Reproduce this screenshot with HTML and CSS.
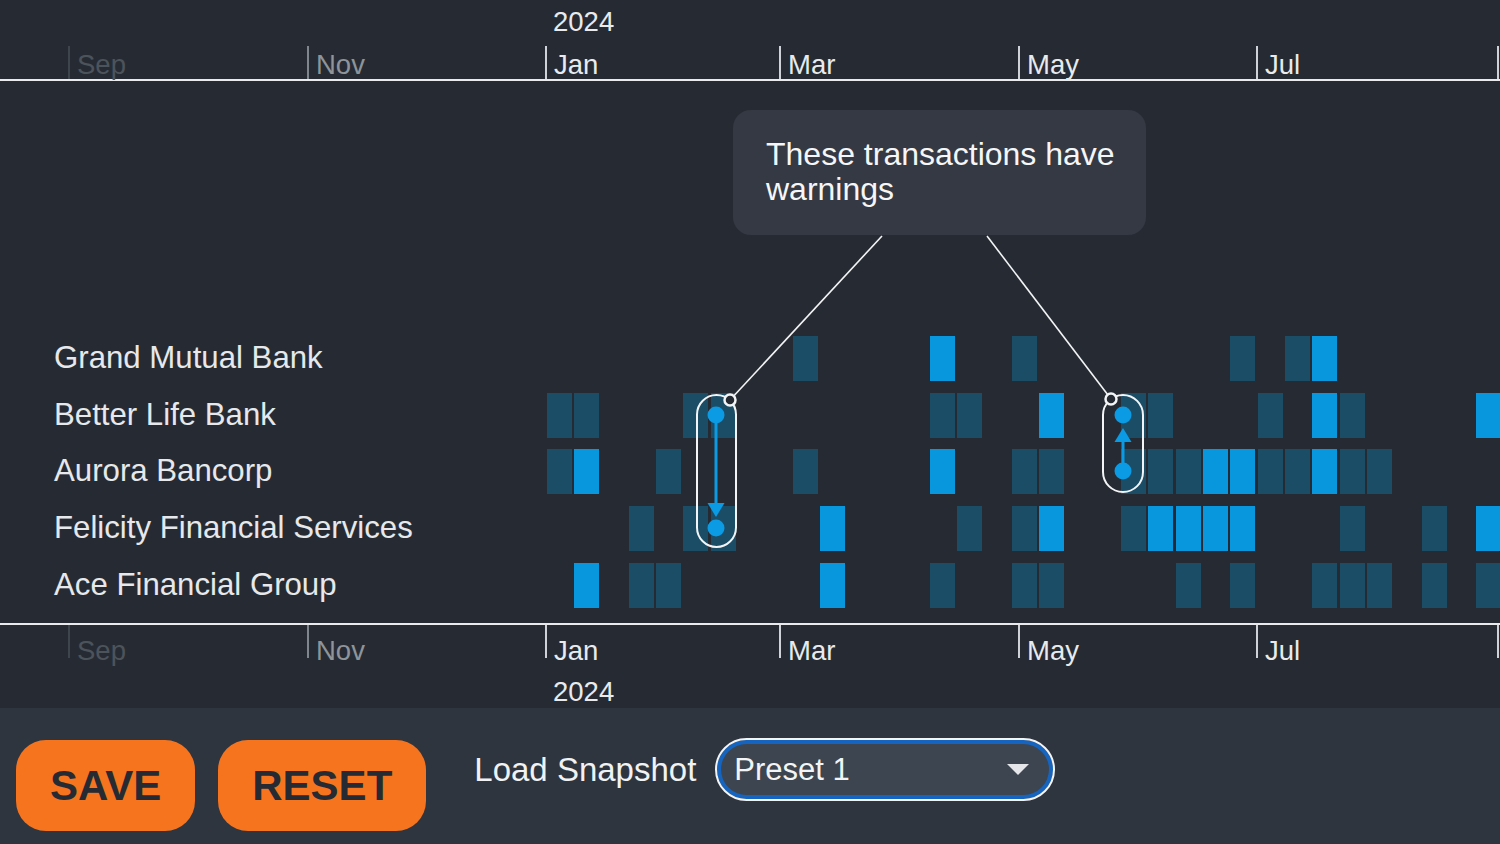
FILE: index.html
```html
<!DOCTYPE html>
<html lang="en">
<head>
<meta charset="utf-8">
<title>Transactions timeline</title>
<link rel="stylesheet" href="styles.css">
</head>
<body>
<div class="app">
  <div class="chart">
    <div class="axis axis-top">
      <div class="year">2024</div>
      <div class="months">
        <div class="m faint" style="width:239px"><span>Sep</span></div>
        <div class="m dim" style="width:238px"><span>Nov</span></div>
        <div class="m" style="width:234px"><span>Jan</span></div>
        <div class="m" style="width:239px"><span>Mar</span></div>
        <div class="m" style="width:238px"><span>May</span></div>
        <div class="m" style="width:241px"><span>Jul</span></div>
        <div class="m rest"></div>
      </div>
    </div>

    <div class="rows">
      <div class="row">
        <div class="label">Grand Mutual Bank</div>
        <div class="cells">
          <i></i><i></i><i></i><i></i><i></i><i></i><i></i><i></i><i></i><i class="d"></i>
          <i></i><i></i><i></i><i></i><i class="b"></i><i></i><i></i><i class="d"></i>
          <i></i><i></i><i></i><i></i><i></i><i></i><i></i><i class="d"></i><i></i><i class="d"></i><i class="b"></i>
        </div>
      </div>
      <div class="row">
        <div class="label">Better Life Bank</div>
        <div class="cells">
          <i class="d"></i><i class="d"></i><i></i><i></i><i></i><i class="d"></i><i class="d"></i>
          <i></i><i></i><i></i><i></i><i></i><i></i><i></i><i class="d"></i><i class="d"></i>
          <i></i><i></i><i class="b"></i><i></i><i></i><i class="d"></i><i class="d"></i>
          <i></i><i></i><i></i><i class="d"></i><i></i><i class="b"></i><i class="d"></i>
          <i></i><i></i><i></i><i></i><i class="b"></i>
        </div>
      </div>
      <div class="row">
        <div class="label">Aurora Bancorp</div>
        <div class="cells">
          <i class="d"></i><i class="b"></i><i></i><i></i><i class="d"></i><i></i><i></i><i></i><i></i><i class="d"></i>
          <i></i><i></i><i></i><i></i><i class="b"></i><i></i><i></i><i class="d"></i><i class="d"></i>
          <i></i><i></i><i class="d"></i><i class="d"></i><i class="d"></i><i class="b"></i><i class="b"></i>
          <i class="d"></i><i class="d"></i><i class="b"></i><i class="d"></i><i class="d"></i>
        </div>
      </div>
      <div class="row">
        <div class="label">Felicity Financial Services</div>
        <div class="cells">
          <i></i><i></i><i></i><i class="d"></i><i></i><i class="d"></i><i class="d"></i>
          <i></i><i></i><i></i><i class="b"></i><i></i><i></i><i></i><i></i><i class="d"></i><i></i><i class="d"></i><i class="b"></i>
          <i></i><i></i><i class="d"></i><i class="b"></i><i class="b"></i><i class="b"></i><i class="b"></i>
          <i></i><i></i><i></i><i class="d"></i><i></i><i></i><i class="d"></i><i></i><i class="b"></i>
        </div>
      </div>
      <div class="row">
        <div class="label">Ace Financial Group</div>
        <div class="cells">
          <i></i><i class="b"></i><i></i><i class="d"></i><i class="d"></i>
          <i></i><i></i><i></i><i></i><i></i><i class="b"></i><i></i><i></i><i></i><i class="d"></i>
          <i></i><i></i><i class="d"></i><i class="d"></i><i></i><i></i><i></i><i></i><i class="d"></i><i></i><i class="d"></i>
          <i></i><i></i><i class="d"></i><i class="d"></i><i class="d"></i><i></i><i class="d"></i><i></i><i class="d"></i>
        </div>
      </div>
    </div>

    <div class="axis axis-bottom">
      <div class="months">
        <div class="m faint" style="width:239px"><span>Sep</span></div>
        <div class="m dim" style="width:238px"><span>Nov</span></div>
        <div class="m" style="width:234px"><span>Jan</span></div>
        <div class="m" style="width:239px"><span>Mar</span></div>
        <div class="m" style="width:238px"><span>May</span></div>
        <div class="m" style="width:241px"><span>Jul</span></div>
        <div class="m rest"></div>
      </div>
      <div class="year">2024</div>
    </div>

    <div class="callout">These transactions have warnings</div>

    <svg class="overlay" width="1500" height="708" viewBox="0 0 1500 708">
      <line x1="882" y1="236" x2="730" y2="400" stroke="#f2f4f6" stroke-width="1.6"/>
      <line x1="987" y1="236" x2="1111" y2="399" stroke="#f2f4f6" stroke-width="1.6"/>

      <rect x="697" y="395" width="39" height="152" rx="19.5" fill="none" stroke="#f2f4f6" stroke-width="2"/>
      <circle cx="716" cy="415" r="8.5" fill="#0b9ae4"/>
      <circle cx="716" cy="528" r="8.5" fill="#0b9ae4"/>
      <line x1="716" y1="423" x2="716" y2="505" stroke="#0b9ae4" stroke-width="3"/>
      <polygon points="707.5,503 724.5,503 716,517" fill="#0b9ae4"/>

      <rect x="1103" y="395" width="40" height="97" rx="20" fill="none" stroke="#f2f4f6" stroke-width="2"/>
      <circle cx="1123" cy="415" r="8.5" fill="#0b9ae4"/>
      <circle cx="1123" cy="471" r="8.5" fill="#0b9ae4"/>
      <line x1="1123" y1="463" x2="1123" y2="440" stroke="#0b9ae4" stroke-width="3"/>
      <polygon points="1114.5,442 1131.5,442 1123,428" fill="#0b9ae4"/>

      <circle cx="730" cy="400" r="5.5" fill="#262b33" stroke="#f2f4f6" stroke-width="2.5"/>
      <circle cx="1111" cy="399" r="5.5" fill="#262b33" stroke="#f2f4f6" stroke-width="2.5"/>
    </svg>
  </div>

  <div class="toolbar">
    <button class="btn">SAVE</button>
    <button class="btn">RESET</button>
    <div class="snapshot">
      <span class="snap-label">Load Snapshot</span>
      <div class="select">
        <span>Preset 1</span>
        <svg class="caret" width="22" height="12" viewBox="0 0 22 12"><polygon points="0,0 22,0 11,11" fill="#e4e6e9"/></svg>
      </div>
    </div>
  </div>
</div>
</body>
</html>
```

FILE: styles.css
```css
* { box-sizing: border-box; }

html, body {
  margin: 0;
  padding: 0;
  background: #262b33;
  font-family: "Liberation Sans", Arial, sans-serif;
  color: #e8eaed;
}

.app {
  width: 1500px;
  height: 844px;
  display: flex;
  flex-direction: column;
  overflow: hidden;
}

.chart {
  position: relative;
  height: 708px;
  flex: none;
  background: #262b33;
  overflow: hidden;
}

/* ---------- axes ---------- */
.axis { font-size: 27.5px; color: #e8eaed; }

.axis .year {
  padding-left: 553px;
  line-height: 33px;
}

.axis-top .year {
  height: 46px;
  line-height: 43px;
}

.months {
  display: flex;
  padding-left: 68px;
}

.axis-top .months { border-bottom: 2px solid #e8eaed; }
.axis-bottom .months { border-top: 2px solid #e8eaed; }

.m {
  flex: none;
  height: 33px;
  border-left: 2px solid #cfd3d7;
  white-space: nowrap;
}

.m span {
  display: block;
  padding-left: 7px;
  line-height: 33px;
}

.axis-top .m span { padding-top: 2px; }
.axis-bottom .m span { margin-top: 9px; }

.m.rest { flex: 1; }
.m.faint { border-left-color: #3f454c; }
.m.faint span { color: #4d535b; }
.m.dim { border-left-color: #80868d; }
.m.dim span { color: #8e949a; }

.axis-bottom .year {
  margin-top: 17px;
}

/* ---------- rows ---------- */
.rows {
  margin-top: 255px;
  display: flex;
  flex-direction: column;
  gap: 11.67px;
}

.row {
  display: flex;
  height: 45px;
}

.label {
  flex: none;
  width: 546.7px;
  padding-left: 54px;
  font-size: 31.2px;
  line-height: 44px;
  color: #e6e8eb;
  white-space: nowrap;
}

.cells {
  display: grid;
  grid-template-columns: repeat(35, 25px);
  column-gap: 2.35px;
  height: 45px;
}

.cells i { display: block; height: 45px; }
.cells i.d { background: #1b4d67; }
.cells i.b { background: #0897dd; }

.axis-bottom { margin-top: 15.3px; }

/* ---------- overlays ---------- */
.callout {
  position: absolute;
  left: 733px;
  top: 110px;
  width: 413px;
  height: 125px;
  padding: 27px 16px 27px 33px;
  background: #353943;
  border-radius: 18px;
  font-size: 32px;
  line-height: 35px;
  color: #f5f6f7;
}

.overlay {
  position: absolute;
  left: 0;
  top: 0;
  pointer-events: none;
}

/* ---------- toolbar ---------- */
.toolbar {
  flex: 1;
  background: #2f353e;
  display: flex;
  align-items: flex-start;
  padding: 30px 0 0 16px;
}

.btn {
  margin: 2px 23px 0 0;
  height: 91px;
  padding: 0 34px;
  border: none;
  border-radius: 30px;
  background: #f7741f;
  color: #262b33;
  font-family: "Liberation Sans", Arial, sans-serif;
  font-weight: bold;
  font-size: 42px;
  line-height: 91px;
}

.snapshot {
  display: flex;
  align-items: center;
  height: 63px;
  margin-left: 25px;
}

.snap-label {
  font-size: 33px;
  color: #f0f2f4;
  margin-right: 19px;
  white-space: nowrap;
}

.select {
  width: 340px;
  height: 63px;
  border: 2px solid #f2f4f6;
  border-radius: 32px;
  box-shadow: inset 0 0 0 4px #1565c0;
  background: #3d4550;
  display: flex;
  align-items: center;
  justify-content: space-between;
  padding: 0 24px 0 17px;
  font-size: 31px;
  color: #f2f4f6;
}

.caret { display: block; margin-top: 1px; }
```
